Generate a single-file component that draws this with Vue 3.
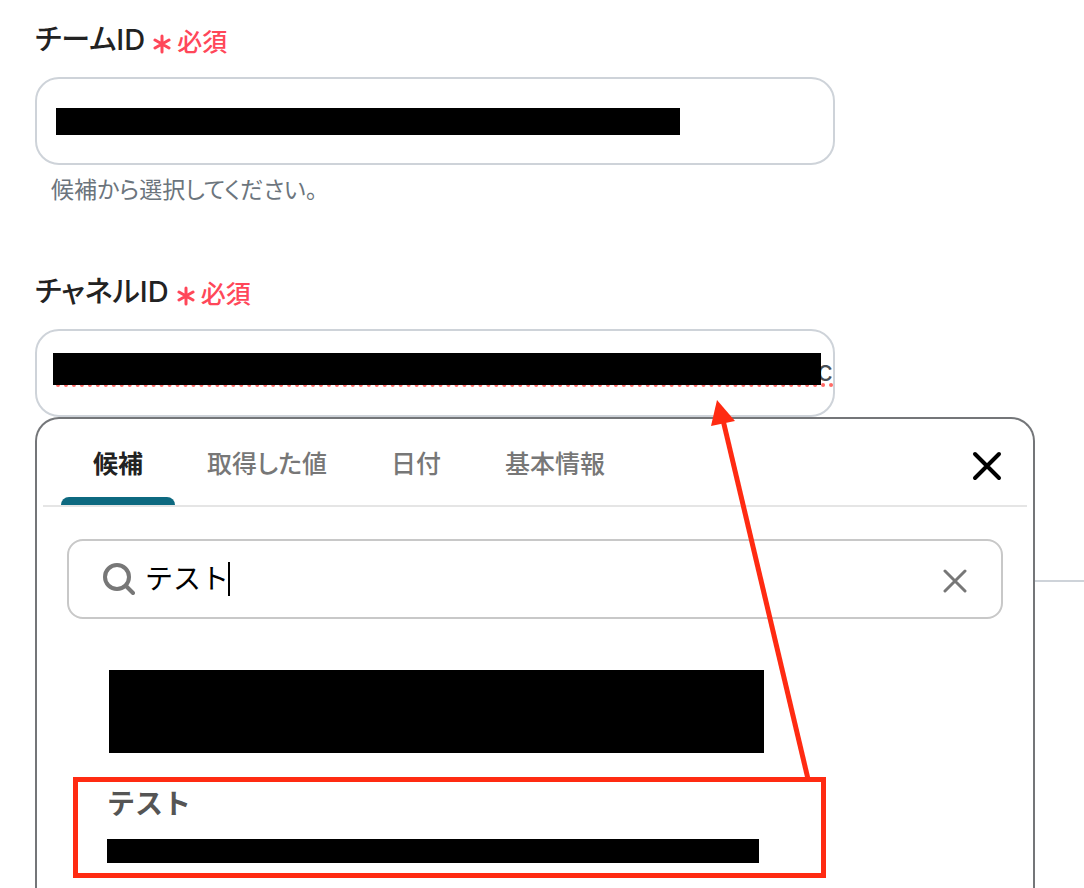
<script setup>
import { ref } from 'vue'

const teamId = ref('')
const channelId = ref('c')
const keyword = ref('テスト')
const tabs = ['候補', '取得した値', '日付', '基本情報']
const activeTab = ref('候補')
</script>

<template>
  <main class="page">
    <section class="field">
      <label class="label" for="team">
        <span>チームID</span>
        <span class="required">
          <svg class="asterisk" viewBox="0 0 18 20" aria-hidden="true">
            <path d="M9 2V18M2 6L16 14M16 6L2 14" />
          </svg>
          必須
        </span>
      </label>
      <div class="control">
        <input id="team" v-model="teamId" class="input" type="text" />
        <span class="mask mask-team"></span>
      </div>
      <p class="hint">候補から選択してください。</p>
    </section>

    <section class="field">
      <label class="label" for="channel">
        <span>チャネルID</span>
        <span class="required">
          <svg class="asterisk" viewBox="0 0 18 20" aria-hidden="true">
            <path d="M9 2V18M2 6L16 14M16 6L2 14" />
          </svg>
          必須
        </span>
      </label>
      <div class="control">
        <input id="channel" v-model="channelId" class="input channel" type="text" spellcheck="false" />
        <span class="spelling"></span>
        <span class="mask mask-channel"></span>
      </div>
    </section>

    <div class="below">
      <section class="panel">
        <header class="head">
          <nav class="tabs" role="tablist">
            <button
              v-for="tab in tabs"
              :key="tab"
              type="button"
              role="tab"
              class="tab"
              :class="{ active: tab === activeTab }"
              :aria-selected="tab === activeTab"
              @click="activeTab = tab"
            >{{ tab }}</button>
          </nav>
          <button class="close" type="button" aria-label="閉じる">
            <svg viewBox="0 0 30 30" width="30" height="30" aria-hidden="true">
              <path d="M3 3L27 27M27 3L3 27" />
            </svg>
          </button>
        </header>

        <div class="search">
          <svg class="glass" viewBox="0 0 32 32" aria-hidden="true">
            <circle cx="14" cy="14" r="12" />
            <path d="M23 23L30 30" />
          </svg>
          <div class="query">
            <input v-model="keyword" class="keyword" type="text" aria-label="検索" />
            <span class="caret"></span>
          </div>
          <button class="clear" type="button" aria-label="クリア">
            <svg viewBox="0 0 24 24" width="24" height="24" aria-hidden="true">
              <path d="M2 2L22 22M22 2L2 22" />
            </svg>
          </button>
        </div>

        <ul class="results">
          <li><button class="result" type="button" aria-label="候補 1"><span class="bar tall"></span></button></li>
          <li class="marked">
            <button class="result picked" type="button">
              <span class="name">テスト</span>
              <span class="bar"></span>
            </button>
          </li>
        </ul>
      </section>
    </div>

    <svg class="arrow" viewBox="0 0 110 380" aria-hidden="true">
      <path class="shaft" d="M13 20L98 379" />
      <path class="tip" d="M7 0L25 21L1 26Z" />
    </svg>
  </main>
</template>

<style>
body {
  background: #fff;
}
</style>

<style scoped>
* {
  box-sizing: border-box;
}

.page {
  position: relative;
  display: flex;
  flex-direction: column;
  min-height: 100vh;
  padding: 20px 0 0 35px;
  overflow: hidden;
  font-family: Inter, "Noto Sans CJK JP", sans-serif;
  color: #222;
}

button,
input {
  font-family: inherit;
  background: none;
  border: 0;
  padding: 0;
  margin: 0;
  outline: none;
}

button {
  cursor: pointer;
}

svg {
  display: block;
  fill: none;
  stroke-linecap: round;
}

.field {
  max-width: 800px;
}

.label {
  display: flex;
  align-items: center;
  gap: 8px;
  height: 40px;
  margin-bottom: 17px;
  font-size: 29px;
  font-weight: 500;
  line-height: 40px;
  font-feature-settings: "palt";
}

.required {
  display: flex;
  align-items: center;
  gap: 6px;
  padding-top: 3px;
  color: #ff4759;
  font-size: 25px;
}

.asterisk {
  width: 18px;
  height: 20px;
  margin-top: 4px;
  stroke: #ff4759;
  stroke-width: 3;
}

.control {
  position: relative;
}

.input {
  display: block;
  width: 100%;
  height: 88px;
  padding: 0 20px;
  border: 2px solid #ced3d9;
  border-radius: 24px;
  color: #495057;
  font-size: 28px;
}

.channel {
  padding: 0 0 4px 20px;
  text-align: right;
}

.mask {
  position: absolute;
  background: #000;
}

.mask-team {
  left: 21px;
  top: 31px;
  width: 78%;
  height: 27px;
}

.mask-channel {
  left: 18px;
  right: 14px;
  top: 24px;
  height: 32px;
}

.spelling {
  position: absolute;
  left: 21px;
  right: 1px;
  top: 54px;
  border-top: 4px dotted #ff6b66;
}

.hint {
  height: 72px;
  margin: 9px 0 26px;
  padding-left: 16px;
  color: #6c757d;
  font-size: 23px;
  line-height: 32px;
  font-feature-settings: "palt";
}

.below {
  position: relative;
  display: flex;
  flex: 1;
  padding-right: 49px;
}

.below::before {
  content: "";
  position: absolute;
  left: 0;
  right: 0;
  top: 163px;
  height: 2px;
  background: #ced3d9;
}

.panel {
  position: relative;
  flex: 1;
  min-width: 0;
  border: 2px solid #747679;
  border-bottom: 0;
  border-radius: 24px 24px 0 0;
  background: #fff;
}

.head {
  display: flex;
  align-items: center;
  justify-content: space-between;
  height: 88px;
  margin: 0 6px;
  padding: 0 25px 0 18px;
  border-bottom: 2px solid #e5e5e5;
}

.tabs {
  display: flex;
  align-self: stretch;
}

.tab {
  position: relative;
  padding: 4px 32px 0;
  color: #777;
  font-size: 25px;
  font-weight: 500;
  line-height: 36px;
  font-feature-settings: "palt";
}

.active {
  color: #222;
  font-weight: 600;
}

.active::after {
  content: "";
  position: absolute;
  left: 0;
  right: 0;
  bottom: 0;
  height: 8px;
  border-radius: 8px 8px 0 0;
  background: #0d6980;
}

.close {
  padding-top: 8px;
}

.close svg {
  stroke: #000;
  stroke-width: 4;
}

.search {
  display: flex;
  align-items: center;
  gap: 10px;
  height: 80px;
  margin: 32px 30px 51px;
  padding: 0 34px;
  border: 2px solid #c8c8c8;
  border-radius: 16px;
}

.glass {
  flex: none;
  width: 32px;
  height: 32px;
  stroke: #777;
  stroke-width: 4;
}

.query {
  position: relative;
  flex: 1;
}

.keyword {
  display: block;
  width: 100%;
  height: 40px;
  padding-bottom: 4px;
  color: #000;
  font-size: 28px;
}

.caret {
  position: absolute;
  left: 83px;
  top: 3px;
  width: 2px;
  height: 34px;
  background: #000;
}

.clear {
  padding-top: 4px;
}

.clear svg {
  stroke: #777;
  stroke-width: 3;
}

.results {
  margin: 0;
  padding: 0 207px 0 36px;
  list-style: none;
}

.result {
  display: block;
  width: 100%;
  padding: 0 62px 0 36px;
  text-align: left;
}

.bar {
  display: block;
  height: 24px;
  background: #000;
}

.tall {
  height: 83px;
}

.marked {
  margin-top: 24px;
  border: 5px solid #ff2b12;
}

.picked {
  padding: 0 62px 10px 29px;
}

.name {
  display: block;
  height: 57px;
  color: #555;
  font-size: 28px;
  font-weight: 600;
  line-height: 44px;
}

.arrow {
  position: absolute;
  left: 710px;
  top: 400px;
  width: 110px;
  height: 380px;
  pointer-events: none;
}

.shaft {
  stroke: #ff2b12;
  stroke-width: 5;
  stroke-linecap: butt;
}

.tip {
  fill: #ff2b12;
}
</style>
